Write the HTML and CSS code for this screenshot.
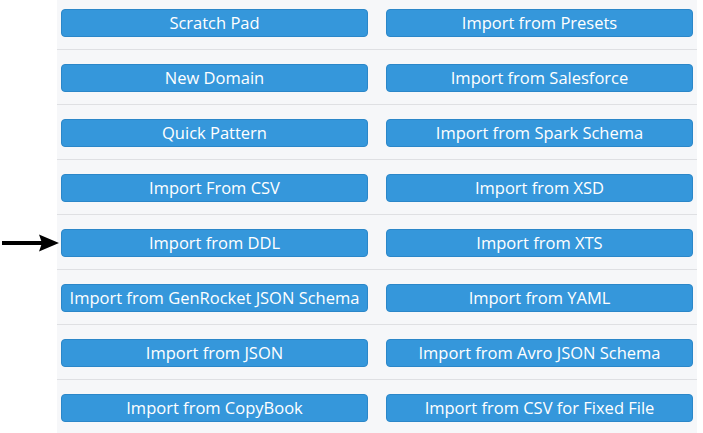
FILE: index.html
```html
<!DOCTYPE html>
<html lang="en">
  <head>
    <meta charset="utf-8">
    <meta name="viewport" content="width=device-width, initial-scale=1">
    <title>Create Domain</title>
    <link rel="stylesheet" href="styles.css">
  </head>
  <body>
    <div class="panel">
      <div class="row">
        <button class="btn">Scratch Pad</button>
        <button class="btn">Import from Presets</button>
      </div>
      <div class="row">
        <button class="btn">New Domain</button>
        <button class="btn">Import from Salesforce</button>
      </div>
      <div class="row">
        <button class="btn">Quick Pattern</button>
        <button class="btn">Import from Spark Schema</button>
      </div>
      <div class="row">
        <button class="btn">Import From CSV</button>
        <button class="btn">Import from XSD</button>
      </div>
      <div class="row marked">
        <svg class="arrow" width="60" height="18" viewBox="0 0 60 18">
          <path d="M2 7 H42 V11 H2 Z" fill="#000"/>
          <path d="M39 0.5 L59 9 L39 17.5 L42 9 Z" fill="#000"/>
        </svg>
        <button class="btn">Import from DDL</button>
        <button class="btn">Import from XTS</button>
      </div>
      <div class="row">
        <button class="btn">Import from GenRocket JSON Schema</button>
        <button class="btn">Import from YAML</button>
      </div>
      <div class="row">
        <button class="btn">Import from JSON</button>
        <button class="btn">Import from Avro JSON Schema</button>
      </div>
      <div class="row">
        <button class="btn">Import from CopyBook</button>
        <button class="btn">Import from CSV for Fixed File</button>
      </div>
    </div>
  </body>
</html>
```
FILE: styles.css
```css
body {
  margin: 0;
  font-family: "Open Sans", "Liberation Sans", sans-serif;
  background: #fff;
}

.panel {
  margin-left: 57px;
  width: 640px;
  min-height: 433px;
  background: #f6f7f9;
}

.row {
  display: grid;
  grid-template-columns: 1fr 1fr;
  column-gap: 18px;
  padding: 14px 4px 12px;
  border-bottom: 1px solid #dfe0e3;
  position: relative;
}

.row:first-child {
  padding-top: 9px;
}

.row:last-child {
  border-bottom: none;
}

.btn {
  height: 28px;
  margin: 0;
  padding: 0 4px;
  border: 1px solid #2b87c9;
  border-radius: 4px;
  background: #3597db;
  color: #fff;
  font-family: inherit;
  font-size: 16.5px;
  font-weight: 500;
  line-height: 1;
  white-space: nowrap;
}

.arrow {
  position: absolute;
  left: -57px;
  top: 19px;
}
```
